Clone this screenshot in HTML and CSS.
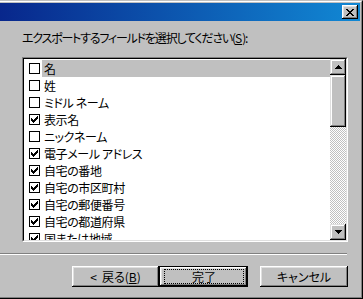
FILE: index.html
```html
<!DOCTYPE html>
<html lang="ja">
<head>
<meta charset="utf-8">
<link rel="stylesheet" href="styles.css">
</head>
<body>
<div class="window">
  <div class="frame">
    <div class="titlebar">
      <div class="close">
        <svg width="8" height="7" viewBox="0 0 8 7" shape-rendering="crispEdges"><g fill="#000">
          <rect x="0" y="0" width="2" height="1"/><rect x="6" y="0" width="2" height="1"/>
          <rect x="1" y="1" width="2" height="1"/><rect x="5" y="1" width="2" height="1"/>
          <rect x="2" y="2" width="4" height="1"/>
          <rect x="3" y="3" width="2" height="1"/>
          <rect x="2" y="4" width="4" height="1"/>
          <rect x="1" y="5" width="2" height="1"/><rect x="5" y="5" width="2" height="1"/>
          <rect x="0" y="6" width="2" height="1"/><rect x="6" y="6" width="2" height="1"/>
        </g></svg>
      </div>
    </div>
    <div class="content">
      <div class="label">エクスポートするフィールドを選択してください(<u>S</u>):</div>
      <div class="list">
        <div class="list-inner">
          <div class="items">
            <div class="item"><span class="cb"></span><span class="txt sel">名</span></div>
            <div class="item"><span class="cb"></span><span class="txt">姓</span></div>
            <div class="item"><span class="cb"></span><span class="txt">ミドル ネーム</span></div>
            <div class="item"><span class="cb on"></span><span class="txt">表示名</span></div>
            <div class="item"><span class="cb"></span><span class="txt">ニックネーム</span></div>
            <div class="item"><span class="cb on"></span><span class="txt">電子メール アドレス</span></div>
            <div class="item"><span class="cb on"></span><span class="txt">自宅の番地</span></div>
            <div class="item"><span class="cb on"></span><span class="txt">自宅の市区町村</span></div>
            <div class="item"><span class="cb on"></span><span class="txt">自宅の郵便番号</span></div>
            <div class="item"><span class="cb on"></span><span class="txt">自宅の都道府県</span></div>
            <div class="item"><span class="cb on"></span><span class="txt">国または地域</span></div>
          </div>
          <div class="scrollbar">
            <div class="sb-btn">
              <svg width="7" height="4" viewBox="0 0 7 4" shape-rendering="crispEdges"><g fill="#000">
                <rect x="3" y="0" width="1" height="1"/><rect x="2" y="1" width="3" height="1"/>
                <rect x="1" y="2" width="5" height="1"/><rect x="0" y="3" width="7" height="1"/>
              </g></svg>
            </div>
            <div class="thumb"></div>
            <div class="track"></div>
            <div class="sb-btn">
              <svg width="7" height="4" viewBox="0 0 7 4" shape-rendering="crispEdges"><g fill="#000">
                <rect x="0" y="0" width="7" height="1"/><rect x="1" y="1" width="5" height="1"/>
                <rect x="2" y="2" width="3" height="1"/><rect x="3" y="3" width="1" height="1"/>
              </g></svg>
            </div>
          </div>
        </div>
      </div>
      <div class="separator"></div>
      <div class="buttons">
        <div class="btn back"><span class="lt">&lt;</span>戻る(<u>B</u>)</div>
        <div class="btn finish"><span class="focus">完了</span></div>
        <div class="btn cancel">キャンセル</div>
      </div>
    </div>
  </div>
</div>
</body>
</html>
```
FILE: styles.css
```css
html, body {
  margin: 0;
  padding: 0;
  background: #c0c0c0;
}
body {
  width: 363px;
  height: 299px;
  overflow: hidden;
  font-family: "Noto Sans CJK JP", "Noto Sans", sans-serif;
  font-size: 12px;
  font-feature-settings: "palt";
  color: #000;
}
.window {
  box-sizing: border-box;
  width: 363px;
  height: 299px;
  border-top: 1px solid #c0c0c0;
  border-right: 1px solid #000;
  border-bottom: 1px solid #000;
}
.frame {
  box-sizing: border-box;
  height: 100%;
  border-top: 1px solid #fff;
  border-right: 1px solid #808080;
  border-bottom: 1px solid #808080;
  padding: 1px 1px 1px 0;
  display: flex;
  flex-direction: column;
}
.titlebar {
  height: 18px;
  flex: none;
  background: linear-gradient(90deg, #08278c 0%, #1188d4 100%);
  display: flex;
  justify-content: flex-end;
  align-items: flex-start;
}
.close {
  width: 16px;
  height: 14px;
  margin: 2px 2px 0 0;
  background: #c0c0c0;
  box-shadow: inset -1px -1px #000, inset 1px 1px #fff, inset -2px -2px #808080, inset 2px 2px #dfdfdf;
  display: flex;
  align-items: center;
  justify-content: center;
}
.close svg { display: block; margin-left: -1px; }
.content {
  flex: 1;
  display: flex;
  flex-direction: column;
}
.label {
  margin: 10px 0 0 22px;
  line-height: 14px;
  height: 14px;
  white-space: nowrap;
  letter-spacing: -1.2px;
}
.label u { letter-spacing: 0; }
.list {
  margin: 12px 0 0 22px;
  width: 326px;
  height: 185px;
  box-sizing: border-box;
  border: 1px solid;
  border-color: #808080 #fff #fff #808080;
}
.list-inner {
  height: 100%;
  box-sizing: border-box;
  border: 1px solid;
  border-color: #000 #dfdfdf #dfdfdf #000;
  background: #fff;
  display: flex;
}
.items {
  flex: 1;
  padding-top: 1px;
  overflow: hidden;
}
.item {
  height: 17px;
  display: flex;
  align-items: center;
}
.cb {
  width: 11px;
  height: 11px;
  box-sizing: border-box;
  border: 1px solid #000;
  background: #fff;
  margin-left: 5px;
  margin-right: 2px;
  flex: none;
}
.cb.on {
  background:
    linear-gradient(#000, #000) 1px 3px / 1px 3px no-repeat,
    linear-gradient(#000, #000) 2px 4px / 1px 3px no-repeat,
    linear-gradient(#000, #000) 3px 5px / 1px 3px no-repeat,
    linear-gradient(#000, #000) 4px 4px / 1px 3px no-repeat,
    linear-gradient(#000, #000) 5px 3px / 1px 3px no-repeat,
    linear-gradient(#000, #000) 6px 2px / 1px 3px no-repeat,
    linear-gradient(#000, #000) 7px 1px / 1px 3px no-repeat,
    #fff;
}
.txt {
  flex: 1;
  height: 17px;
  line-height: 17px;
  padding-left: 2px;
  white-space: nowrap;
  letter-spacing: -0.4px;
}
.txt.sel { background: #c0c0c0; }
.scrollbar {
  width: 16px;
  flex: none;
  display: flex;
  flex-direction: column;
}
.sb-btn {
  height: 16px;
  flex: none;
  background: #c0c0c0;
  box-shadow: inset -1px -1px #000, inset 1px 1px #dfdfdf, inset -2px -2px #808080, inset 2px 2px #fff;
  display: flex;
  align-items: center;
  justify-content: center;
}
.sb-btn svg { display: block; }
.thumb {
  height: 52px;
  flex: none;
  background: #c0c0c0;
  box-shadow: inset -1px -1px #000, inset 1px 1px #dfdfdf, inset -2px -2px #808080, inset 2px 2px #fff;
}
.track {
  flex: 1;
  background: repeating-conic-gradient(#c0c0c0 0 25%, #fff 0 50%) 0 0 / 2px 2px;
}
.separator {
  margin-top: 11px;
  width: 347px;
  height: 0;
  border-top: 1px solid #808080;
  border-bottom: 1px solid #fff;
}
.buttons {
  margin-top: 11px;
  display: flex;
  padding-left: 72px;
}
.btn {
  height: 21px;
  box-sizing: border-box;
  background: #c0c0c0;
  box-shadow: inset -1px -1px #000, inset 1px 1px #fff, inset -2px -2px #808080, inset 2px 2px #dfdfdf;
  display: flex;
  align-items: center;
  justify-content: center;
  line-height: 14px;
  white-space: nowrap;
}
.lt { margin-right: 5px; }
.back { width: 87px; }
.finish {
  width: 89px;
  border: 1px solid #000;
  padding: 2px 3px 2px 4px;
}
.focus {
  flex: 1;
  align-self: stretch;
  border: 1px dotted #000;
  display: flex;
  align-items: center;
  justify-content: center;
}
.cancel { width: 88px; margin-left: 12px; }
```
